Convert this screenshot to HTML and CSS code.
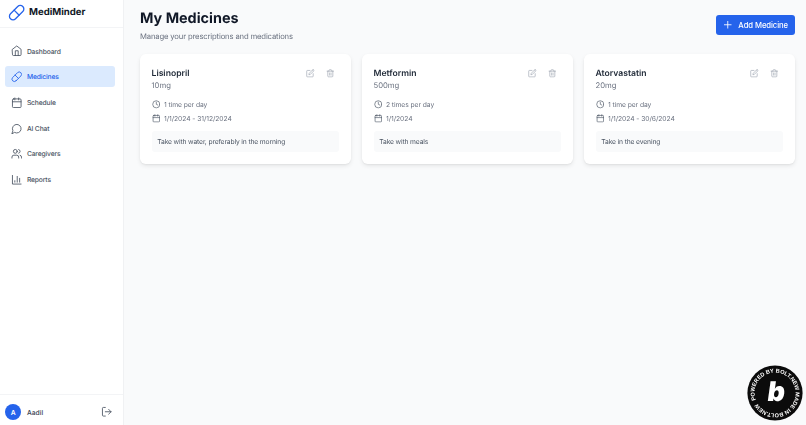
FILE: index.html
```html
<!DOCTYPE html>
<html lang="en">
<head>
<meta charset="utf-8">
<title>MediMinder</title>
<link rel="stylesheet" href="styles.css">
</head>
<body>
<svg class="defs" width="0" height="0" aria-hidden="true">
  <symbol id="i-home" viewBox="0 0 24 24"><path d="m3 9 9-7 9 7v11a2 2 0 0 1-2 2H5a2 2 0 0 1-2-2z"/><polyline points="9 22 9 12 15 12 15 22"/></symbol>
  <symbol id="i-pill" viewBox="0 0 24 24"><path d="m10.5 20.5 10-10a4.95 4.95 0 1 0-7-7l-10 10a4.95 4.95 0 1 0 7 7Z"/><path d="m8.5 8.5 7 7"/></symbol>
  <symbol id="i-cal" viewBox="0 0 24 24"><rect x="3" y="4" width="18" height="18" rx="2"/><path d="M16 2v4M8 2v4M3 10h18"/></symbol>
  <symbol id="i-chat" viewBox="0 0 24 24"><path d="M7.9 20A9 9 0 1 0 4 16.1L2 22Z"/></symbol>
  <symbol id="i-users" viewBox="0 0 24 24"><path d="M16 21v-2a4 4 0 0 0-4-4H6a4 4 0 0 0-4 4v2"/><circle cx="9" cy="7" r="4"/><path d="M22 21v-2a4 4 0 0 0-3-3.87"/><path d="M16 3.13a4 4 0 0 1 0 7.75"/></symbol>
  <symbol id="i-chart" viewBox="0 0 24 24"><path d="M3 3v18h18"/><path d="M18 17V9"/><path d="M13 17V5"/><path d="M8 17v-3"/></symbol>
  <symbol id="i-edit" viewBox="0 0 24 24"><path d="M11 4H4a2 2 0 0 0-2 2v14a2 2 0 0 0 2 2h14a2 2 0 0 0 2-2v-7"/><path d="M18.5 2.5a2.121 2.121 0 0 1 3 3L12 15l-4 1 1-4 9.5-9.5z"/></symbol>
  <symbol id="i-trash" viewBox="0 0 24 24"><path d="M3 6h18"/><path d="M19 6v14c0 1-1 2-2 2H7c-1 0-2-1-2-2V6"/><path d="M8 6V4c0-1 1-2 2-2h4c1 0 2 1 2 2v2"/><path d="M10 11v6M14 11v6"/></symbol>
  <symbol id="i-clock" viewBox="0 0 24 24"><circle cx="12" cy="12" r="10"/><polyline points="12 6 12 12 16 14"/></symbol>
  <symbol id="i-logout" viewBox="0 0 24 24"><path d="M9 21H5a2 2 0 0 1-2-2V5a2 2 0 0 1 2-2h4"/><polyline points="16 17 21 12 16 7"/><path d="M21 12H9"/></symbol>
  <symbol id="i-plus" viewBox="0 0 24 24"><path d="M5 12h14M12 5v14"/></symbol>
</svg>

<div class="app">
  <aside class="sidebar">
    <div class="brand">
      <svg class="icon logo"><use href="#i-pill"/></svg>
      <span class="brand-name">MediMinder</span>
    </div>
    <nav class="nav">
      <a class="nav-item"><svg class="icon"><use href="#i-home"/></svg>Dashboard</a>
      <a class="nav-item active"><svg class="icon"><use href="#i-pill"/></svg>Medicines</a>
      <a class="nav-item"><svg class="icon"><use href="#i-cal"/></svg>Schedule</a>
      <a class="nav-item"><svg class="icon"><use href="#i-chat"/></svg>AI Chat</a>
      <a class="nav-item"><svg class="icon"><use href="#i-users"/></svg>Caregivers</a>
      <a class="nav-item"><svg class="icon"><use href="#i-chart"/></svg>Reports</a>
    </nav>
    <div class="user">
      <span class="avatar">A</span>
      <span class="user-name">Aadil</span>
      <svg class="icon logout"><use href="#i-logout"/></svg>
    </div>
  </aside>

  <main class="main">
    <header class="page-head">
      <div>
        <h1 class="title">My Medicines</h1>
        <p class="subtitle">Manage your prescriptions and medications</p>
      </div>
      <button class="add-btn"><svg class="icon"><use href="#i-plus"/></svg>Add Medicine</button>
    </header>

    <section class="cards">
      <article class="card">
        <div class="card-top">
          <div>
            <h2 class="med-name">Lisinopril</h2>
            <p class="dose">10mg</p>
          </div>
          <div class="actions"><svg class="icon"><use href="#i-edit"/></svg><svg class="icon"><use href="#i-trash"/></svg></div>
        </div>
        <div class="meta">
          <div class="meta-row"><svg class="icon"><use href="#i-clock"/></svg>1 time per day</div>
          <div class="meta-row"><svg class="icon"><use href="#i-cal"/></svg>1/1/2024 - 31/12/2024</div>
        </div>
        <p class="note">Take with water, preferably in the morning</p>
      </article>

      <article class="card">
        <div class="card-top">
          <div>
            <h2 class="med-name">Metformin</h2>
            <p class="dose">500mg</p>
          </div>
          <div class="actions"><svg class="icon"><use href="#i-edit"/></svg><svg class="icon"><use href="#i-trash"/></svg></div>
        </div>
        <div class="meta">
          <div class="meta-row"><svg class="icon"><use href="#i-clock"/></svg>2 times per day</div>
          <div class="meta-row"><svg class="icon"><use href="#i-cal"/></svg>1/1/2024</div>
        </div>
        <p class="note">Take with meals</p>
      </article>

      <article class="card">
        <div class="card-top">
          <div>
            <h2 class="med-name">Atorvastatin</h2>
            <p class="dose">20mg</p>
          </div>
          <div class="actions"><svg class="icon"><use href="#i-edit"/></svg><svg class="icon"><use href="#i-trash"/></svg></div>
        </div>
        <div class="meta">
          <div class="meta-row"><svg class="icon"><use href="#i-clock"/></svg>1 time per day</div>
          <div class="meta-row"><svg class="icon"><use href="#i-cal"/></svg>1/1/2024 - 30/6/2024</div>
        </div>
        <p class="note">Take in the evening</p>
      </article>
    </section>
  </main>
</div>

<svg class="bolt-badge" viewBox="0 0 56 56" role="img" aria-label="Powered by Bolt.new">
  <defs><path id="badge-ring" d="M7.5 28a20.5 20.5 0 1 1 41 0a20.5 20.5 0 1 1-41 0"/></defs>
  <circle cx="28" cy="28" r="27.6" fill="#0b0b0b"/>
  <g transform="rotate(-20 28 28)">
    <text class="badge-ring-text"><textPath href="#badge-ring">POWERED BY BOLT.NEW MADE IN BOLT.NEW</textPath></text>
  </g>
  <text class="badge-b" x="29.5" y="35.5" text-anchor="middle">b</text>
</svg>
</body>
</html>
```

FILE: styles.css
```css
* { box-sizing: border-box; margin: 0; padding: 0; }

html, body { height: 100%; }

body {
  font-family: Inter, "Liberation Sans", sans-serif;
  background: #f9fafb;
  color: #111827;
  overflow: hidden;
  text-rendering: geometricPrecision;
}

.defs { position: absolute; }

.icon {
  width: 11.5px;
  height: 11.5px;
  flex: none;
  fill: none;
  stroke: currentColor;
  stroke-width: 1.8;
  stroke-linecap: round;
  stroke-linejoin: round;
}

.app { display: flex; height: 425px; will-change: opacity; }

/* Sidebar */
.sidebar {
  width: 124px;
  flex: none;
  display: flex;
  flex-direction: column;
  background: #fff;
  border-right: 1px solid #f0f1f3;
}

.brand {
  height: 27.5px;
  display: flex;
  align-items: center;
  gap: 3.5px;
  padding: 0 0 2px 8.2px;
  border-bottom: 1px solid #f3f4f6;
}

.logo { width: 17.3px; height: 17.3px; color: #2563eb; }

.brand-name { font-size: 9.6px; font-weight: 700; color: #111827; }

.nav {
  flex: 1;
  display: flex;
  flex-direction: column;
  gap: 4.6px;
  padding: 13.2px 8px 0 5px;
}

.nav-item {
  height: 21.1px;
  display: flex;
  align-items: center;
  gap: 4.9px;
  padding: 0 5.5px;
  border-radius: 3px;
  font-size: 6.72px;
  font-weight: 500;
  letter-spacing: -.02em;
  color: #4b5563;
}

.nav-item.active { background: #dbeafe; color: #2563eb; }

.user {
  height: 31px;
  display: flex;
  align-items: center;
  padding: 4px 10.75px 0 5.3px;
  border-top: 1px solid #f3f4f6;
}

.avatar {
  width: 16px;
  height: 16px;
  display: flex;
  align-items: center;
  justify-content: center;
  border-radius: 50%;
  background: #2563eb;
  color: #fff;
  font-size: 6.72px;
  font-weight: 600;
}

.user-name { flex: 1; margin-left: 5.7px; font-size: 6.72px; font-weight: 500; color: #374151; }

.logout { color: #4b5563; }

/* Main */
.main { flex: 1; padding: 15px 11.5px 0 16px; }

.page-head {
  display: flex;
  justify-content: space-between;
  align-items: flex-start;
  margin-bottom: 11px;
}

.title { font-size: 14.4px; line-height: 17.3px; font-weight: 700; color: #111827; margin-top: -5.5px; }

.subtitle { font-size: 7.68px; line-height: 11.5px; margin-top: 4.5px; letter-spacing: -.02em; color: #6b7280; }

.add-btn {
  width: 78.5px;
  height: 20px;
  display: flex;
  align-items: center;
  justify-content: center;
  gap: 4.4px;
  border: 0;
  border-radius: 3px;
  background: #2563eb;
  color: #fff;
  font-family: inherit;
  font-size: 7.68px;
  font-weight: 500;
  letter-spacing: -.01em;
}

.cards {
  display: grid;
  grid-template-columns: repeat(3, 1fr);
  gap: 11.5px;
}

.card {
  height: 110px;
  padding: 14.5px 11.5px 11.5px;
  background: #fff;
  border-radius: 5.8px;
  box-shadow: 0 2px 4px rgba(0, 0, 0, .08), 0 1px 2px rgba(0, 0, 0, .05);
}

.card-top { display: flex; justify-content: space-between; align-items: flex-start; }

.med-name { font-size: 8.64px; line-height: 12px; font-weight: 600; color: #1f2937; }

.dose { font-size: 7.68px; line-height: 11.5px; color: #6b7280; }

.actions {
  display: flex;
  gap: 10.9px;
  padding: .8px 4.4px 0 0;
  color: #9ca3af;
}

.actions .icon { width: 8.64px; height: 8.64px; }

.meta {
  display: flex;
  flex-direction: column;
  gap: 3.8px;
  margin-top: 7.5px;
}

.meta-row {
  display: flex;
  align-items: center;
  gap: 3.84px;
  height: 10.1px;
  font-size: 6.72px;
  letter-spacing: -.06px;
  color: #6b7280;
}

.meta-row .icon { width: 8.64px; height: 8.64px; color: #4b5563; }

.note {
  margin-top: 7.5px;
  height: 21.5px;
  display: flex;
  align-items: center;
  padding: 0 5.8px;
  border-radius: 2.9px;
  background: #f9fafb;
  font-size: 6.72px;
  letter-spacing: -.02em;
  color: #4b5563;
}

/* Floating badge */
.bolt-badge {
  position: absolute;
  left: 747px;
  top: 365px;
  width: 56px;
  height: 56px;
}

.badge-ring-text {
  font-family: "Liberation Sans", sans-serif;
  font-size: 5.6px;
  font-weight: 700;
  fill: #fff;
}

.badge-b {
  font-family: Inter, sans-serif;
  font-size: 27px;
  font-weight: 900;
  fill: #fff;
  transform: skewX(-8deg);
  transform-box: fill-box;
  transform-origin: center;
}
```
